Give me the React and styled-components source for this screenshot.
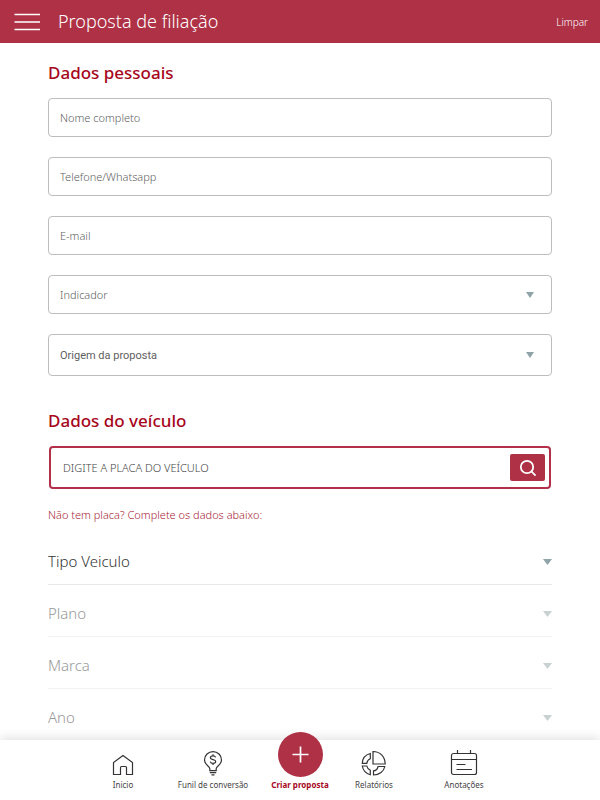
import React from 'react';
import styled, { createGlobalStyle } from 'styled-components';

const GlobalStyle = createGlobalStyle`
  * {
    box-sizing: border-box;
  }

  body {
    margin: 0;
    background: #fff;
    color: #444;
    font-family: 'Noto Sans', 'Open Sans', sans-serif;
    font-weight: 300;
  }

  button, input, select {
    margin: 0;
    font: inherit;
  }
`;

const Page = styled.div`
  display: flex;
  flex-direction: column;
  height: 100vh;
`;

const Header = styled.header`
  display: flex;
  flex: none;
  align-items: center;
  gap: 18px;
  padding: 8px 12px 8px 14px;
  background: #ae3146;
  color: #fff;
`;

const IconButton = styled.button`
  display: flex;
  padding: 0;
  border: 0;
  background: none;
  color: inherit;
  cursor: pointer;
`;

const PageTitle = styled.h1`
  flex: 1;
  margin: 0;
  font-size: 18px;
  font-weight: 300;
  line-height: 27px;
`;

const ClearButton = styled.button`
  padding: 0;
  border: 0;
  background: none;
  color: inherit;
  font-size: 10px;
  line-height: 16px;
  cursor: pointer;
`;

const Content = styled.main`
  flex: 1;
  min-height: 0;
  overflow: hidden auto;
  padding: 18px 48px 0;
  scrollbar-width: none;
`;

const Section = styled.section`
  margin-bottom: 33px;
`;

const SectionTitle = styled.h2`
  margin: 0 0 13px;
  color: #a6061c;
  font-size: 17px;
  font-weight: 500;
  line-height: 24px;
`;

const Fields = styled.div`
  display: grid;
  gap: 20px;
`;

const TextField = styled.input`
  width: 100%;
  height: 39px;
  padding: 0 11px;
  border: 1px solid #bdbdbd;
  border-radius: 4px;
  outline: 0;
  background: #fff;
  color: #444;
  font-size: 11px;

  &::placeholder {
    color: #606060;
    opacity: 1;
  }
`;

const SelectBox = styled.div`
  display: grid;
  align-items: center;

  > * {
    grid-area: 1 / 1;
  }

  > svg {
    justify-self: end;
    margin-right: ${({ $inset }) => $inset || 0};
    pointer-events: none;
  }
`;

const SelectField = styled.select`
  width: 100%;
  height: ${({ $tall }) => ($tall ? '42px' : '39px')};
  padding: 0 11px;
  border: 1px solid #bdbdbd;
  border-radius: 4px;
  outline: 0;
  appearance: none;
  background: #fff;
  color: #606060;
  font-family: ${({ $tall }) => ($tall ? 'Roboto, sans-serif' : 'inherit')};
  font-weight: ${({ $tall }) => ($tall ? 400 : 300)};
  font-size: 11px;
`;

const PlateSearch = styled.form`
  display: flex;
  align-items: center;
  height: 43px;
  margin: 0 1px;
  padding: 0 4px 0 12px;
  border: 2px solid #b3304a;
  border-radius: 4px;
`;

const PlateInput = styled.input`
  flex: 1;
  min-width: 0;
  padding: 0;
  border: 0;
  outline: 0;
  background: none;
  font-size: 11px;

  &::placeholder {
    color: #444;
    opacity: 1;
  }
`;

const SearchButton = styled.button`
  display: flex;
  align-items: center;
  justify-content: center;
  width: 35px;
  height: 27px;
  padding: 0;
  border: 0;
  border-radius: 2px;
  background: #ae3146;
  color: #fff;
  cursor: pointer;
`;

const Hint = styled.p`
  margin: 18px 0 10px;
  color: #a81d38;
  font-size: 11px;
  line-height: 16px;
`;

const RowSelect = styled.select`
  width: 100%;
  height: 52px;
  padding: 5px 0 0;
  border: 0;
  border-bottom: 1px solid #e8e8e8;
  border-radius: 0;
  outline: 0;
  appearance: none;
  background: none;
  color: #333;
  font-size: 15px;
  line-height: 20px;

  & + svg {
    margin-top: 5px;
  }

  &:disabled {
    border-color: #f2f2f2;
    color: #999;
    opacity: 1;
  }
`;

const BottomNav = styled.nav`
  position: relative;
  display: flex;
  flex: none;
  justify-content: center;
  height: 60px;
  background: #fff;
  box-shadow: 0 -2px 10px rgba(0, 0, 0, 0.12);
`;

const NavItems = styled.div`
  display: grid;
  flex: 0 1 444px;
  grid-template-columns: 90fr 90fr 84fr 64fr 116fr;
  align-items: end;
  padding-bottom: 8px;
`;

const NavLink = styled.a`
  display: flex;
  flex-direction: column;
  align-items: center;
  gap: 1px;
  color: ${({ $active }) => ($active ? '#a6061c' : '#444')};
  font-size: 8px;
  font-weight: ${({ $active }) => ($active ? 700 : 400)};
  line-height: 14px;
  text-decoration: none;
  white-space: nowrap;
`;

const AddCircle = styled.span`
  display: flex;
  align-items: center;
  justify-content: center;
  width: 45px;
  height: 45px;
  margin-top: -20px;
  border-radius: 50%;
  background: #ae3146;
  color: #fff;
`;

const MenuIcon = () => (
  <svg width="26" height="18" fill="none" stroke="currentColor" strokeWidth="1.5" aria-hidden="true">
    <path d="M0.5 1.5h26M0.5 9h26M0.5 16.5h26" />
  </svg>
);

const Caret = ({ large, faded }) => (
  <svg width={large ? 9 : 8} height="6" viewBox="0 0 9 6" preserveAspectRatio="none" aria-hidden="true">
    <path d="M0 0h9L4.5 6z" fill={faded ? '#c8d2d2' : '#8fa3a8'} />
  </svg>
);

const SearchIcon = () => (
  <svg width="18" height="18" fill="none" stroke="currentColor" strokeWidth="1.8" aria-hidden="true">
    <circle cx="8" cy="8" r="6.2" />
    <path d="M12.4 12.4l4.2 4.2" />
  </svg>
);

const iconProps = {
  width: 28,
  height: 28,
  fill: 'none',
  stroke: '#333',
  strokeWidth: 1.2,
  'aria-hidden': true,
};

const HomeIcon = () => (
  <svg {...iconProps}>
    <path d="M4.5 25.5v-12L14 6.5l9.5 7v12h-6v-7q0-1-1-1h-4q-1 0-1 1v7z" />
  </svg>
);

const BulbIcon = () => (
  <svg {...iconProps}>
    <path d="M10.8 21.6v-2c0-2.2-5.3-3.8-5.3-8.7a8.5 8.3 0 0 1 17 0c0 4.9-5.3 6.5-5.3 8.7v2z" />
    <path d="M10.8 23.7h6.4M12.5 25.8h3" />
    <path d="M16.6 8.400c-.3-1-1.200-1.500-2.600-1.500-1.600 0-2.600.7-2.600 1.900 0 2.700 5.300 1.100 5.300 3.700 0 1.200-1.100 1.900-2.700 1.900-1.500 0-2.500-.6-2.800-1.700M14 5.200v1.700M14 14.400v1.700" />
  </svg>
);

const ChartIcon = () => (
  <svg {...iconProps}>
    <path d="M13 2.500c7 0 12 5 12.200 12.500H13z" />
    <path d="M10.300 4.500v5.200c-2 .8-3.200 2.400-3.500 4.600H2.300C2.500 9.600 5.500 5.700 10.300 4.500z" />
    <path d="M2.300 17h4.500c.4 2 1.600 3.400 3.500 4.200v4.600C6 24.500 3 21.500 2.300 17z" />
    <path d="M13.500 21.800c2.300 0 3.900-1.500 4.600-4.300h6.700C23.800 22.400 19.500 26 13.500 26z" />
  </svg>
);

const NotesIcon = () => (
  <svg {...iconProps}>
    <rect x="1.5" y="4.5" width="25" height="21" rx="2" />
    <path d="M1.5 10.500h25M7.500 1v3.500M20.500 1v3.500M6.500 15.500h9M6.500 20.500h15.500" />
  </svg>
);

const PlusIcon = () => (
  <svg width="17" height="17" fill="none" stroke="currentColor" strokeWidth="1.7" aria-hidden="true">
    <path d="M8.5 0.5v16M0.5 8.5h16" />
  </svg>
);

const textFields = [
  { name: 'nome', label: 'Nome completo', type: 'text' },
  { name: 'telefone', label: 'Telefone/Whatsapp', type: 'tel' },
  { name: 'email', label: 'E-mail', type: 'email' },
];

const vehicleRows = [
  { label: 'Tipo Veiculo' },
  { label: 'Plano', disabled: true },
  { label: 'Marca', disabled: true },
  { label: 'Ano', disabled: true },
];

const App = () => (
  <Page>
    <GlobalStyle />
    <Header>
      <IconButton type="button" aria-label="Menu"><MenuIcon /></IconButton>
      <PageTitle>Proposta de filiação</PageTitle>
      <ClearButton type="button">Limpar</ClearButton>
    </Header>

    <Content>
      <Section>
        <SectionTitle>Dados pessoais</SectionTitle>
        <Fields>
          {textFields.map(({ name, label, type }) => (
            <TextField key={name} name={name} type={type} placeholder={label} aria-label={label} />
          ))}
          <SelectBox $inset="18px">
            <SelectField aria-label="Indicador"><option>Indicador</option></SelectField>
            <Caret />
          </SelectBox>
          <SelectBox $inset="18px">
            <SelectField $tall aria-label="Origem da proposta"><option>Origem da proposta</option></SelectField>
            <Caret />
          </SelectBox>
        </Fields>
      </Section>

      <Section>
        <SectionTitle>Dados do veículo</SectionTitle>
        <PlateSearch onSubmit={e => e.preventDefault()}>
          <PlateInput placeholder="DIGITE A PLACA DO VEÍCULO" aria-label="Placa do veículo" />
          <SearchButton type="submit" aria-label="Buscar"><SearchIcon /></SearchButton>
        </PlateSearch>
        <Hint>Não tem placa? Complete os dados abaixo:</Hint>
        {vehicleRows.map(({ label, disabled }) => (
          <SelectBox key={label}>
            <RowSelect disabled={disabled} aria-label={label}><option>{label}</option></RowSelect>
            <Caret large faded={disabled} />
          </SelectBox>
        ))}
      </Section>
    </Content>

    <BottomNav>
      <NavItems>
        <NavLink href="#inicio"><HomeIcon />Inicio</NavLink>
        <NavLink href="#funil"><BulbIcon />Funil de conversão</NavLink>
        <NavLink href="#proposta" $active>
          <AddCircle><PlusIcon /></AddCircle>
          Criar proposta
        </NavLink>
        <NavLink href="#relatorios"><ChartIcon />Relatórios</NavLink>
        <NavLink href="#anotacoes"><NotesIcon />Anotações</NavLink>
      </NavItems>
    </BottomNav>
  </Page>
);

export default App;
